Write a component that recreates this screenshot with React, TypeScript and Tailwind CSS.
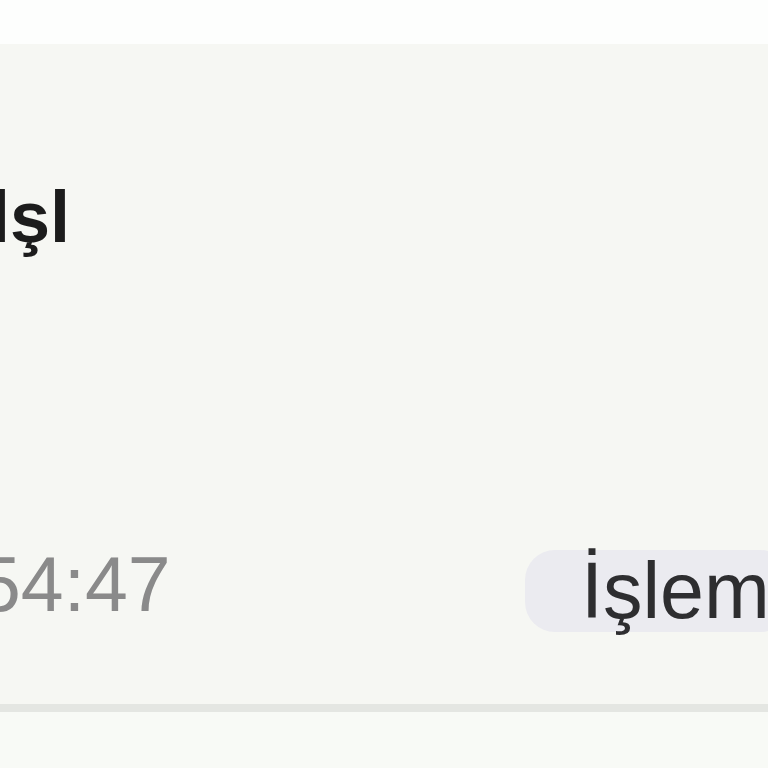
export default function App() {
  return (
    <div className="w-[768px] h-[768px] overflow-hidden bg-[#fdfefd] flex flex-col font-['Liberation_Sans',Arial,sans-serif]">
      <div className="h-[44px] shrink-0 bg-[#fdfefd]" />
      <div className="h-[668px] shrink-0 bg-[#f6f7f3] border-b-[8px] border-[#e4e6e2] flex flex-col">
        <div className="pt-[137px] ml-[-10px]">
          <div className="text-[72px] leading-[72px] font-bold text-[#1c1c1c] whitespace-nowrap">lşl</div>
        </div>
        <div className="mt-[293px] flex items-center">
          <div className="ml-[-22px] mb-[14px] w-[547px] shrink-0 text-[77px] leading-[76px] text-[#8a8a8a] whitespace-nowrap">54:47</div>
          <div className="h-[82px] shrink-0 rounded-[30px] bg-[#ebebf0] pl-[56px] pr-[20px] flex items-center">
            <span className="text-[79px] leading-[76px] text-[#2e2e30] whitespace-nowrap">İşlem</span>
          </div>
        </div>
      </div>
      <div className="flex-1 bg-[#f8faf6]" />
    </div>
  );
}
